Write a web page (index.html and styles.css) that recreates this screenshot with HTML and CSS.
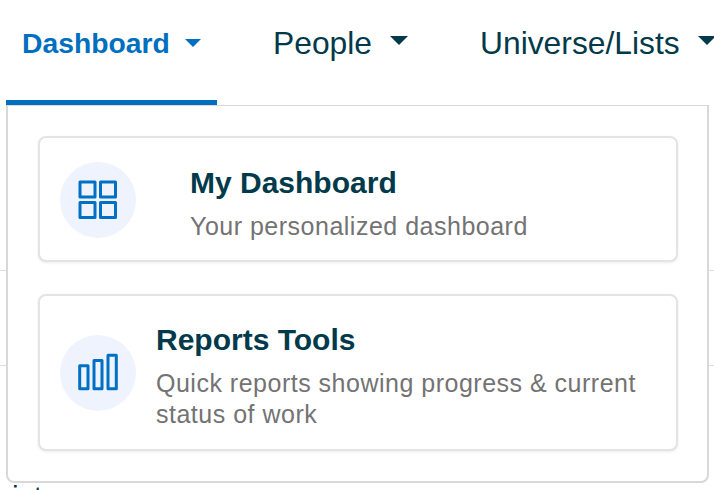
FILE: index.html
```html
<!DOCTYPE html>
<html lang="en">
<head>
  <meta charset="UTF-8" />
  <meta name="viewport" content="width=device-width, initial-scale=1.0" />
  <title>Dashboard menu</title>
  <link rel="stylesheet" href="styles.css">
</head>
<body>
  <nav class="topnav">
    <a class="tab active">Dashboard <span class="caret"></span></a>
    <a class="tab">People <span class="caret"></span></a>
    <a class="tab">Universe/Lists <span class="caret"></span></a>
  </nav>

  <div class="page">
    <div class="page-row"></div>
    <div class="page-row"></div>
    <div class="page-text">ist</div>
  </div>

  <div class="menu">
    <a class="card card-first">
      <span class="card-icon">
        <svg width="40" height="40" viewBox="0 0 40 40" fill="none" stroke="#0070c4" stroke-width="3" stroke-linejoin="round">
          <rect x="2" y="2" width="15" height="15" />
          <rect x="22.500" y="2" width="15" height="15" />
          <rect x="2" y="22.500" width="15" height="15" />
          <rect x="22.500" y="22.500" width="15" height="15" />
        </svg>
      </span>
      <span class="card-body">
        <span class="card-title">My Dashboard</span>
        <span class="card-text">Your personalized dashboard</span>
      </span>
    </a>
    <a class="card card-second">
      <span class="card-icon">
        <svg width="40" height="40" viewBox="0 0 40 40" fill="none" stroke="#0070c4" stroke-width="3" stroke-linejoin="round">
          <rect x="1.700" y="12.800" width="8.300" height="23" />
          <rect x="16" y="7.500" width="8" height="28.300" />
          <rect x="30" y="2.200" width="8.300" height="33.600" />
        </svg>
      </span>
      <span class="card-body">
        <span class="card-title">Reports Tools</span>
        <span class="card-text">Quick reports showing progress &amp; current status of work</span>
      </span>
    </a>
  </div>
</body>
</html>
```

FILE: styles.css
```css
html, body {
  height: 100%;
}
body {
  margin: 0;
  overflow: hidden;
  background: #fff;
  color: #023a4b;
  font-family: "Liberation Sans", Arial, sans-serif;
}
.topnav {
  display: flex;
  height: 105px;
  padding-left: 6px;
  white-space: nowrap;
}
.tab {
  display: block;
  width: 268px;
  flex: none;
  box-sizing: border-box;
  padding: 22px 0 0 0;
  font-size: 31.8px;
  line-height: 42px;
}
.tab:nth-child(2) {
  width: 207px;
}
.tab.active {
  width: 211px;
  margin-right: 56px;
  padding-left: 16px;
  border-bottom: 5px solid #006fbf;
  color: #006fbf;
  font-size: 28.3px;
  font-weight: bold;
}
.caret {
  display: inline-block;
  margin-left: 9px;
  vertical-align: 9px;
  border-top: 9px solid currentColor;
  border-left: 9px solid transparent;
  border-right: 9px solid transparent;
}
.tab.active .caret {
  margin-left: 7px;
  vertical-align: 6px;
  border-top-width: 8px;
  border-left-width: 8px;
  border-right-width: 8px;
}
.page-row {
  height: 94px;
  border-bottom: 1px solid #ddd;
}
.page-row:first-child {
  height: 165px;
}
.page-text {
  margin: 114px 0 0 12px;
  font-size: 30px;
  line-height: 34px;
}
.menu {
  position: absolute;
  top: 105px;
  left: 6px;
  width: 703px;
  height: 378px;
  box-sizing: border-box;
  padding: 30px 30px 0 30px;
  background: #fff;
  border: 2px solid #d8d8d8;
  border-top-width: 1px;
  border-radius: 0 0 8px 8px;
}
.card {
  display: flex;
  align-items: center;
  box-sizing: border-box;
  width: 640px;
  padding-left: 20px;
  background: #fff;
  border: 2px solid #e4e4e4;
  border-radius: 8px;
  box-shadow: 0 1px 3px rgba(0, 0, 0, 0.08);
}
.card-first {
  height: 126px;
  margin-bottom: 32px;
}
.card-first .card-icon {
  margin-top: 2px;
}
.card-second {
  height: 157px;
}
.card-icon {
  display: flex;
  align-items: center;
  justify-content: center;
  flex: none;
  width: 76px;
  height: 76px;
  border-radius: 50%;
  background: #eef3fd;
}
.card-body {
  display: block;
  margin: 6px 0 0 20px;
}
.card-first .card-body {
  margin: 8px 0 0 54px;
}
.card-title {
  display: block;
  font-size: 30px;
  line-height: 36px;
  font-weight: bold;
}
.card-text {
  display: block;
  margin-top: 10px;
  color: #737373;
  font-size: 25px;
  line-height: 31px;
  letter-spacing: 0.5px;
}
```
